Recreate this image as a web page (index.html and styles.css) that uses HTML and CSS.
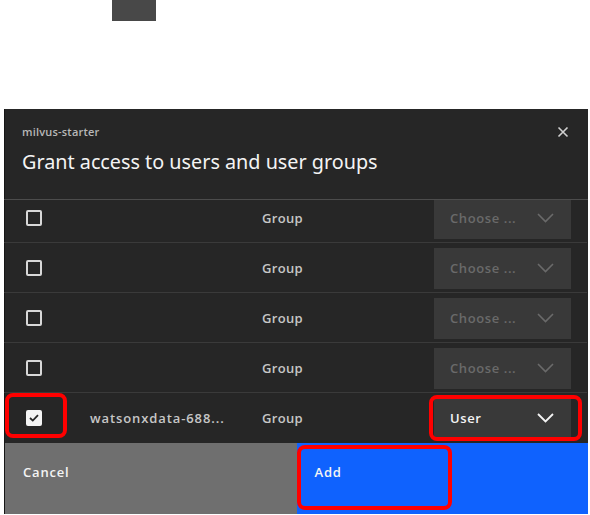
FILE: index.html
```html
<!DOCTYPE html>
<html>
<head>
<meta charset="utf-8">
<link rel="stylesheet" href="styles.css">
</head>
<body>
<div class="page">
  <div class="topblock"></div>
  <div class="modal">
    <div class="header">
      <div class="header-text">
        <div class="label">milvus-starter</div>
        <div class="title">Grant access to users and user groups</div>
      </div>
      <div class="close">
        <svg width="12" height="12" viewBox="0 0 12 12"><path d="M1.5 1.5 L10.5 10.5 M10.5 1.5 L1.5 10.5" stroke="#d0d0d0" stroke-width="1.6" fill="none"/></svg>
      </div>
    </div>
    <div class="table">
      <div class="rows">
        <div class="row">
          <div class="cell-check"><span class="checkbox"></span></div>
          <div class="cell-name"></div>
          <div class="cell-type">Group</div>
          <div class="select disabled"><span>Choose ...</span><svg width="17" height="10" viewBox="0 0 17 10"><path d="M1 1 L8.5 8.5 L16 1" stroke="currentColor" stroke-width="1.6" fill="none"/></svg></div>
        </div>
        <div class="row">
          <div class="cell-check"><span class="checkbox"></span></div>
          <div class="cell-name"></div>
          <div class="cell-type">Group</div>
          <div class="select disabled"><span>Choose ...</span><svg width="17" height="10" viewBox="0 0 17 10"><path d="M1 1 L8.5 8.5 L16 1" stroke="currentColor" stroke-width="1.6" fill="none"/></svg></div>
        </div>
        <div class="row">
          <div class="cell-check"><span class="checkbox"></span></div>
          <div class="cell-name"></div>
          <div class="cell-type">Group</div>
          <div class="select disabled"><span>Choose ...</span><svg width="17" height="10" viewBox="0 0 17 10"><path d="M1 1 L8.5 8.5 L16 1" stroke="currentColor" stroke-width="1.6" fill="none"/></svg></div>
        </div>
        <div class="row">
          <div class="cell-check"><span class="checkbox"></span></div>
          <div class="cell-name"></div>
          <div class="cell-type">Group</div>
          <div class="select disabled"><span>Choose ...</span><svg width="17" height="10" viewBox="0 0 17 10"><path d="M1 1 L8.5 8.5 L16 1" stroke="currentColor" stroke-width="1.6" fill="none"/></svg></div>
        </div>
        <div class="row">
          <div class="cell-check"><span class="checkbox checked"><svg width="10" height="8" viewBox="0 0 10 8"><path d="M1 4 L3.8 6.6 L9 1.2" stroke="#262626" stroke-width="1.8" fill="none"/></svg></span><span class="mark mark-check"></span></div>
          <div class="cell-name">watsonxdata-688...</div>
          <div class="cell-type">Group</div>
          <div class="select active"><span>User</span><svg width="17" height="10" viewBox="0 0 17 10"><path d="M1 1 L8.5 8.5 L16 1" stroke="currentColor" stroke-width="1.8" fill="none"/></svg><span class="mark mark-select"></span></div>
        </div>
      </div>
    </div>
    <div class="footer">
      <div class="btn cancel">Cancel</div>
      <div class="btn add">Add<span class="mark mark-add"></span></div>
    </div>
  </div>
</div>
</body>
</html>
```

FILE: styles.css
```css
html, body {
  margin: 0;
  padding: 0;
  background: #ffffff;
}
.page {
  width: 590px;
  height: 515px;
  overflow: hidden;
  font-family: "Open Sans", "Liberation Sans", sans-serif;
}
.topblock {
  width: 44px;
  height: 21px;
  margin-left: 112px;
  background: #484848;
}
.modal {
  margin-top: 88px;
  margin-left: 4px;
  width: 584px;
  height: 405px;
  background: #262626;
  display: flex;
  flex-direction: column;
  box-shadow: inset 1px 0 0 #161616;
}
.header {
  height: 90px;
  border-bottom: 1px solid #4c4c4c;
  display: flex;
  justify-content: space-between;
  padding: 0 0 0 18px;
  box-sizing: content-box;
}
.header-text {
  padding-top: 15px;
}
.label {
  font-size: 11px;
  font-weight: 600;
  color: #b8b8b8;
  line-height: 16px;
  letter-spacing: 0.2px;
}
.title {
  margin-top: 9px;
  font-family: "Noto Sans", "Open Sans", sans-serif;
  font-size: 19.8px;
  color: #f4f4f4;
  line-height: 26px;
}
.close {
  width: 12px;
  height: 12px;
  margin: 17px 19px 0 0;
}
.close svg { display: block; }
.table {
  height: 243px;
  overflow: hidden;
}
.rows {
  margin-top: -8px;
}
.row {
  height: 49px;
  border-top: 1px solid #3a3a3a;
  display: flex;
  align-items: center;
  margin-right: 1px;
}
.cell-check {
  width: 86px;
  padding-left: 22px;
  box-sizing: border-box;
  position: relative;
  height: 100%;
  display: flex;
  align-items: center;
}
.checkbox {
  width: 12px;
  height: 12px;
  border: 2px solid #d8d8d8;
  border-radius: 2px;
  display: flex;
  align-items: center;
  justify-content: center;
}
.checkbox.checked {
  background: #f4f4f4;
  border-color: #f4f4f4;
}
.cell-name {
  width: 172px;
  font-size: 13px;
  font-weight: 600;
  color: #c6c6c6;
  letter-spacing: 0.9px;
}
.cell-type {
  width: 172px;
  font-size: 13px;
  font-weight: 600;
  color: #c6c6c6;
  letter-spacing: 0.3px;
}
.select {
  width: 137px;
  height: 41px;
  margin-top: 1px;
  background: #393939;
  display: flex;
  align-items: center;
  justify-content: space-between;
  padding: 0 17px 0 16px;
  box-sizing: border-box;
  font-size: 13px;
  font-weight: 600;
  letter-spacing: 0.6px;
  position: relative;
}
.select svg { display: block; }
.select.disabled {
  color: #6a6a6a;
}
.select.active {
  color: #f4f4f4;
}
.footer {
  flex: 1;
  display: flex;
}
.btn {
  flex: 1;
  padding: 20px 0 0 18px;
  font-size: 13px;
  font-weight: 600;
  color: #f4f4f4;
  letter-spacing: 0.8px;
  position: relative;
}
.cancel {
  background: #6f6f6f;
  margin-left: 1px;
}
.add {
  background: #0f62fe;
}
.mark {
  position: absolute;
  border: 4px solid #ff0000;
  border-radius: 8px;
  box-sizing: border-box;
}
.mark-check {
  left: 1px;
  top: 0;
  width: 62px;
  height: 45px;
}
.mark-select {
  left: -5px;
  top: -3px;
  width: 153px;
  height: 46px;
}
.mark-add {
  left: 0;
  top: 2px;
  width: 155px;
  height: 65px;
}
```
